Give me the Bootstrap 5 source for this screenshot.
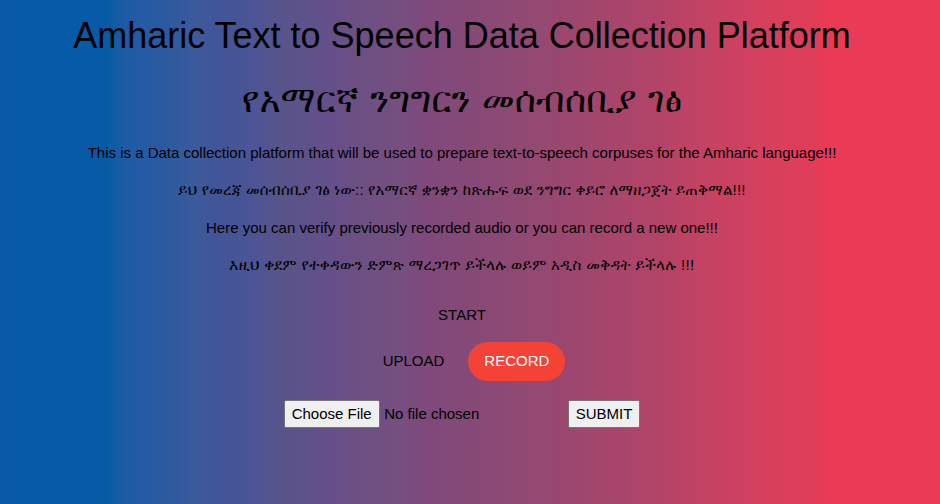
<!DOCTYPE html>
<html lang="en">
<head>
<meta charset="utf-8">
<meta name="viewport" content="width=device-width, initial-scale=1">
<title>Amharic Text to Speech Data Collection Platform</title>
<link href="https://cdn.jsdelivr.net/npm/bootstrap@5.3.0/dist/css/bootstrap.min.css" rel="stylesheet">
<style>
html{overflow:hidden}
body{
  height:504px;width:940px;overflow:hidden;color:#000;
  font:15px/22.5px "Liberation Sans",FreeSerif,sans-serif;
  background:linear-gradient(90deg,#085aa9 0,#075aa8 88px,#065ba4 106px,#1c5ca4 124px,#255aa5 142px,#2e5a9f 172px,#3d5a9b 196px,#405599 214px,#475496 239px,#505493 260px,#585489 282px,#5f518b 311px,#684f88 340px,#6c5082 358px,#754f80 400px,#7f497b 425px,#864977 470px,#944972 540px,#98476f 556px,#a4466c 605px,#af446a 640px,#b34368 660px,#bf4364 690px,#cf4061 745px,#d5405d 762px,#df3d59 812px,#ea3a55 824px,#ea3a55 100%);
}
.page-body{width:924px;padding-top:9px}
.title-line{font-size:36px;line-height:54px;height:54px;font-weight:400;margin:0 0 10px;white-space:nowrap}
.title-line:lang(am){letter-spacing:.2px;word-spacing:1.2px}
.intro-line{height:22.5px;margin:0 0 15px;white-space:nowrap}
.intro-line:lang(am){line-height:20.5px;letter-spacing:.19px}
.intro-line.wider:lang(am){letter-spacing:.39px}
.intro-block{padding-top:5px}
.pill-btn{height:38.5px;padding:8px 16px;border:0;border-radius:32px;background:transparent;color:#000}
.pill-btn.record{background:#f44336;color:#fff}
.mode-row{padding:7.5px 0 0 8px}
.file-row{padding-top:19.5px}
.file-pick{width:280px;height:28px}
.file-pick::file-selector-button,.send-btn{
  height:28px;padding:1px 6.5px;border:1px solid #767676;
  border-radius:2px;background:#efefef;color:#000;font:inherit;line-height:24px
}
.file-pick::file-selector-button{padding-right:7.5px}
</style>
</head>
<body>
<main class="page-body text-center">
  <h1 class="title-line">Amharic Text to Speech Data Collection Platform</h1>
  <h1 class="title-line" lang="am">የአማርኛ ንግግርን መሰብሰቢያ ገፅ</h1>
  <section class="intro-block">
    <p class="intro-line">This is a Data collection platform that will be used to prepare text-to-speech corpuses for the Amharic language!!!</p>
    <p class="intro-line" lang="am">ይህ የመረጃ መሰብሰቢያ ገፅ ነው:: የአማርኛ ቋንቋን ከጽሑፍ ወደ ንግግር ቀይሮ ለማዘጋጀት ይጠቅማል!!!</p>
    <p class="intro-line">Here you can verify previously recorded audio or you can record a new one!!!</p>
    <p class="intro-line wider" lang="am">እዚህ ቀደም የተቀዳውን ድምጽ ማረጋገጥ ይችላሉ ወይም አዲስ መቅዳት ይችላሉ !!!</p>
  </section>
  <div class="pt-1"><button type="button" class="pill-btn">START</button></div>
  <div class="mode-row d-flex justify-content-center gap-2">
    <button type="button" class="pill-btn">UPLOAD</button>
    <button type="button" class="pill-btn record">RECORD</button>
  </div>
  <form class="file-row d-flex justify-content-center gap-1">
    <input class="file-pick" type="file" aria-label="Audio file">
    <button type="button" class="send-btn">SUBMIT</button>
  </form>
</main>
<script src="https://cdn.jsdelivr.net/npm/bootstrap@5.3.0/dist/js/bootstrap.bundle.min.js"></script>
</body>
</html>
